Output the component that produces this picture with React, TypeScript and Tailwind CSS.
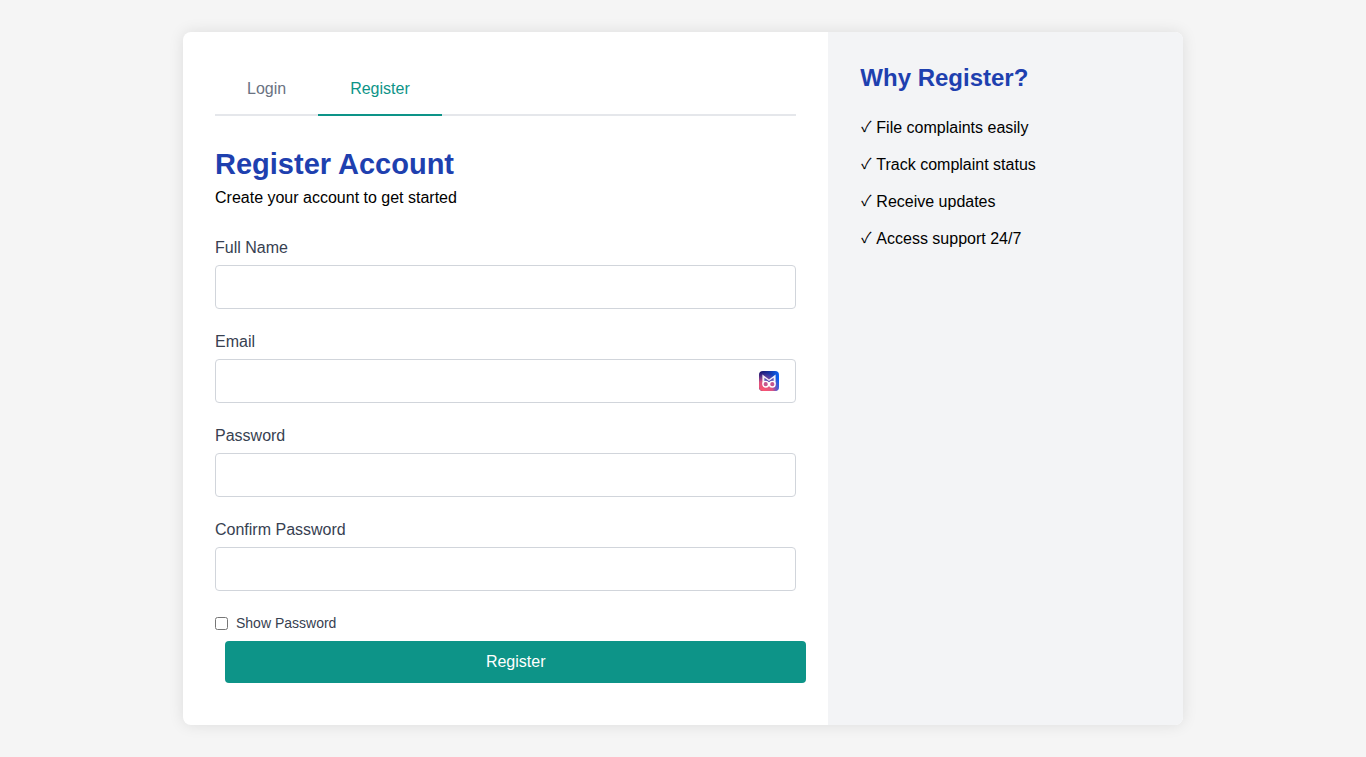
import { useState } from "react";

const fields = [
  { id: "name", label: "Full Name", kind: "text" },
  { id: "email", label: "Email", kind: "email" },
  { id: "password", label: "Password", kind: "password" },
  { id: "confirm", label: "Confirm Password", kind: "password" },
];

const benefits = [
  "File complaints easily",
  "Track complaint status",
  "Receive updates",
  "Access support 24/7",
];

function MaskIcon() {
  return (
    <svg viewBox="0 0 20 20" className="absolute top-3 right-[17px] size-5" aria-hidden="true">
      <defs>
        <linearGradient id="mask-base" x1="0" y1="0" x2="1" y2="0">
          <stop offset="0" stopColor="#1b0f63" />
          <stop offset="0.5" stopColor="#17339f" />
          <stop offset="1" stopColor="#0a63f5" />
        </linearGradient>
        <radialGradient id="mask-glow" cx="0.2" cy="1" r="0.95">
          <stop offset="0" stopColor="#ff5470" />
          <stop offset="0.5" stopColor="#f0587f" stopOpacity="0.9" />
          <stop offset="1" stopColor="#8a5bd0" stopOpacity="0" />
        </radialGradient>
      </defs>
      <rect width="20" height="20" rx="4" fill="url(#mask-base)" />
      <rect width="20" height="20" rx="4" fill="url(#mask-glow)" />
      <path d="M3.4 3.4 10 8.4l6.6-5v9.8H3.4z" fill="#fff" fillOpacity="0.92" />
      <path d="M5.4 6.8 10 10l4.6-3.2v3.4L10 11.2l-4.6-1z" fill="#5a4fb0" />
      <g fill="#c4568f" stroke="#fff" strokeWidth="1.4">
        <circle cx="6.7" cy="13.2" r="2.8" />
        <circle cx="13.3" cy="13.2" r="2.8" />
      </g>
    </svg>
  );
}

export default function App() {
  const [visible, setVisible] = useState(false);

  return (
    <div className="min-h-screen bg-[#f5f5f5] px-4 py-8 font-['Liberation_Sans',Arial,sans-serif] text-base text-black">
      <main className="mx-auto flex max-w-[1000px] overflow-hidden rounded-lg bg-white shadow-[0_0_15px_rgba(0,0,0,0.1)]">
        <section className="flex-2 p-8">
          <nav className="flex border-b-2 border-gray-200">
            <button type="button" className="-mb-0.5 border-b-2 border-transparent px-8 py-[13px] text-gray-500">
              Login
            </button>
            <button type="button" className="-mb-0.5 border-b-2 border-[#0d9488] px-8 py-[13px] text-[#0d9488]">
              Register
            </button>
          </nav>

          <h1 className="mt-8 text-[29px] leading-8 font-bold text-[#1e40af]">Register Account</h1>
          <p className="mt-1.5">Create your account to get started</p>

          <form className="mt-[26px]" onSubmit={(e) => e.preventDefault()}>
            <div className="space-y-[21px]">
              {fields.map((f) => (
                <div key={f.id}>
                  <label htmlFor={f.id} className="block text-[#374151]">
                    {f.label}
                  </label>
                  <div className="relative mt-[5px]">
                    <input
                      id={f.id}
                      type={f.kind === "password" && visible ? "text" : f.kind}
                      className="block h-11 w-full rounded border border-[#d1d5db] bg-white px-3 outline-none focus:border-teal-600"
                    />
                    {f.id === "email" && <MaskIcon />}
                  </div>
                </div>
              ))}
            </div>
            <div className="mt-5 flex h-6 items-center gap-2">
              <input
                id="show"
                type="checkbox"
                checked={visible}
                onChange={(e) => setVisible(e.target.checked)}
                className="size-[13px]"
              />
              <label htmlFor="show" className="text-sm text-[#374151]">
                Show Password
              </label>
            </div>
            <div className="mt-1.5 mb-2.5 -mr-2.5 ml-2.5">
              <button type="submit" className="h-[42px] w-full rounded bg-[#0d9488] text-white">
                Register
              </button>
            </div>
          </form>
        </section>

        <aside className="flex-1 bg-[#f3f4f6] p-8">
          <h2 className="text-2xl leading-7 font-bold text-[#1e40af]">Why Register?</h2>
          <ul className="mt-6 space-y-[13px]">
            {benefits.map((b) => (
              <li key={b} className="flex h-6 gap-1">
                <span className="flex w-3 justify-center font-['Noto_Sans_CJK_JP',sans-serif] text-[15px] leading-5">✓</span>
                <span>{b}</span>
              </li>
            ))}
          </ul>
        </aside>
      </main>
    </div>
  );
}
